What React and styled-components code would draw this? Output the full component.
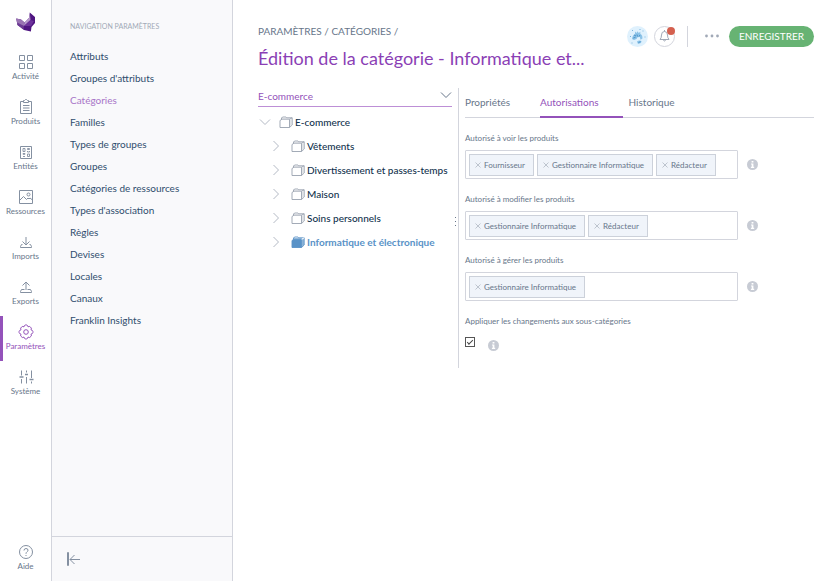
import React from "react";
import styled, { createGlobalStyle, css } from "styled-components";

const color = {
  purple: "#9452ba",
  purpleDark: "#8b3fb5",
  ink: "#2f4d6d",
  dark: "#11324d",
  grey: "#67768a",
  icon: "#8490a1",
  greyLight: "#a1a9b7",
  line: "#d3d5dd",
  panel: "#f9f9fb",
  blue: "#5992c7",
  green: "#67b373",
};

const GlobalStyle = createGlobalStyle`
  *, *::before, *::after { box-sizing: border-box; }
  body { margin: 0; background: #fff; }
  body, button, input, select {
    font-family: Lato, "Open Sans", sans-serif;
    font-size: 10px;
  }
  button { padding: 0; border: 0; background: none; color: inherit; cursor: pointer; }
  ul { list-style: none; margin: 0; padding: 0; }
  a { color: inherit; text-decoration: none; }
  svg { display: block; flex: none; }
`;

const Page = styled.div`
  display: flex;
  min-height: 100vh;
`;

const Rail = styled.nav`
  flex: none;
  width: 52px;
  display: flex;
  flex-direction: column;
  border-right: 1px solid ${color.line};
`;

const LogoLink = styled.a`
  height: 46px;
  display: flex;
  justify-content: center;
  padding-top: 12px;
`;

const RailLink = styled.a`
  height: 45px;
  padding-top: 8px;
  display: flex;
  flex-direction: column;
  align-items: center;
  font-size: 8px;
  line-height: 13px;
  white-space: nowrap;
  color: ${(p) => (p.$active ? color.purple : color.grey)};
  ${(p) => p.$active && css`box-shadow: inset 3px 0 ${color.purple};`}

  > svg { color: ${(p) => (p.$active ? color.purple : color.icon)}; }
`;

const RailFoot = styled.div`
  margin-top: auto;
`;

const Panel = styled.aside`
  flex: none;
  width: 181px;
  display: flex;
  flex-direction: column;
  background: ${color.panel};
  border-right: 1px solid ${color.line};
`;

const PanelBody = styled.div`
  flex: 1;
  padding: 20px 18px 0;
`;

const PanelHeading = styled.h2`
  margin: 0 0 13px;
  font-size: 7px;
  line-height: 12px;
  font-weight: 400;
  text-transform: uppercase;
  color: ${color.greyLight};
`;

const PanelLink = styled.a`
  display: block;
  line-height: 22px;
  color: ${(p) => (p.$active ? "#a875c8" : color.ink)};
`;

const PanelFoot = styled.div`
  height: 45px;
  display: flex;
  align-items: center;
  padding-left: 14px;
  border-top: 1px solid ${color.line};
  color: ${color.icon};
`;

const Main = styled.main`
  flex: 1;
  min-width: 0;
  padding: 25px 26px 0 25px;
`;

const Header = styled.header`
  display: flex;
  justify-content: space-between;
  gap: 24px;
`;

const Heading = styled.div`
  min-width: 0;
`;

const Breadcrumb = styled.nav`
  line-height: 13px;
  text-transform: uppercase;
  color: ${color.grey};
`;

const Title = styled.h1`
  margin: 5px 0 0;
  font-size: 18px;
  line-height: 30px;
  font-weight: 400;
  white-space: nowrap;
  color: ${color.purpleDark};
`;

const Actions = styled.div`
  flex: none;
  display: flex;
  align-items: center;
  height: 22px;
`;

const RoundButton = styled.button`
  position: relative;
  width: 21px;
  height: 21px;
  margin-right: 6px;
  display: grid;
  place-items: center;
  border-radius: 50%;
  border: ${(p) => (p.$outlined ? `1px solid ${color.line}` : "0")};
  background: ${(p) => (p.$outlined ? "#fff" : "#dff1fd")};
  color: ${color.greyLight};
`;

const Badge = styled.span`
  position: absolute;
  top: 0;
  right: -1px;
  width: 8px;
  height: 8px;
  border-radius: 50%;
  background: #d4604f;
`;

const Separator = styled.span`
  width: 1px;
  height: 21px;
  margin: 0 17px 0 6px;
  background: ${color.line};
`;

const DotsButton = styled.button`
  height: 20px;
  margin-right: 10px;
  color: ${color.greyLight};
`;

const SaveButton = styled.button`
  height: 21px;
  padding: 0 10px;
  border-radius: 11px;
  background: ${color.green};
  color: #fff;
  text-transform: uppercase;
`;

const Columns = styled.div`
  display: flex;
  margin-top: 15px;
`;

const TreeColumn = styled.section`
  flex: none;
  width: 194px;
`;

const TreeSelectWrap = styled.div`
  display: grid;
  align-items: center;
  border-bottom: 1px solid #bd8fd6;

  > * { grid-area: 1 / 1; }
  > svg { justify-self: end; color: ${color.grey}; pointer-events: none; margin-bottom: 5px; }
`;

const TreeSelect = styled.select`
  appearance: none;
  width: 100%;
  height: 18px;
  padding: 0 0 2px;
  border: 0;
  background: none;
  color: ${color.purple};
`;

const TreeList = styled.ul`
  padding-top: 3px;
`;

const TreeRow = styled.li`
  height: 24px;
  display: flex;
  align-items: center;
  padding-left: ${(p) => (p.$level ? 14 : 1)}px;
  color: ${(p) => (p.$selected ? color.blue : color.dark)};
`;

const Toggle = styled.button`
  width: ${(p) => (p.$level ? 12 : 13)}px;
  height: 14px;
  margin-right: 7px;
  display: grid;
  place-items: center start;
  color: #b4bac5;
`;

const NodeButton = styled.button`
  display: flex;
  align-items: center;
  gap: 2px;
  font-weight: ${(p) => (p.$selected ? 700 : 500)};
  white-space: nowrap;
`;

const Handle = styled.div`
  flex: none;
  width: 6px;
  display: flex;
  align-items: center;
  justify-content: flex-end;
  padding: 0 1px 12px 0;
  color: ${color.grey};
`;

const Detail = styled.section`
  flex: 1;
  min-width: 0;
  padding: 0 0 17px 6px;
  border-left: 1px solid ${color.line};
`;

const Tabs = styled.div`
  display: flex;
  gap: 6px;
  border-bottom: 1px solid ${color.line};
`;

const Tab = styled.button`
  height: 30px;
  margin-bottom: -1px;
  padding-right: 24px;
  border-bottom: 2px solid ${(p) => (p.$active ? color.purple : "transparent")};
  color: ${(p) => (p.$active ? color.purple : color.grey)};
`;

const Form = styled.form`
  padding-top: 14px;
`;

const Field = styled.div`
  margin-bottom: 14px;
`;

const FieldLabel = styled.label`
  display: block;
  font-size: ${(p) => p.$size || 8}px;
  line-height: 12px;
  margin-bottom: 6px;
  color: ${color.grey};
`;

const FieldLine = styled.div`
  display: flex;
  align-items: center;
  gap: 9px;
`;

const TagBox = styled.div`
  flex: 0 1 273px;
  min-width: 0;
  height: 29px;
  display: flex;
  align-items: center;
  gap: 3px;
  padding: 0 3px;
  border: 1px solid ${color.line};
  border-radius: 1px;
`;

const Tag = styled.span`
  flex: none;
  height: 22px;
  display: flex;
  align-items: center;
  gap: 3px;
  padding: 0 8px 0 5px;
  border: 1px solid #ccd1da;
  background: #f0f4fa;
  font-size: 8px;
  color: ${color.grey};
`;

const RemoveButton = styled.button`
  color: #b0b7c3;
`;

const TagInput = styled.input`
  flex: 1;
  min-width: 0;
  height: 20px;
  padding: 0;
  border: 0;
  outline: 0;
  background: none;
`;

const InfoButton = styled.button`
  color: #c7cbd4;
`;

const CheckLine = styled.div`
  display: flex;
  align-items: flex-start;
  gap: 13px;
`;

const Checkbox = styled.input`
  appearance: none;
  width: 10px;
  height: 10px;
  margin: 4px 0 0;
  display: grid;
  place-items: center;
  border: 1px solid #555;
  background: #fff;

  &:checked::before {
    content: "";
    width: 6px;
    height: 3px;
    margin-bottom: 2px;
    border: solid #444;
    border-width: 0 0 1px 1px;
    transform: rotate(-45deg);
  }
`;

const CheckInfo = styled(InfoButton)`
  margin-top: 7px;
`;

const Stroke = ({ w = 16, h = 16, box, children, ...rest }) => (
  <svg width={w} height={h} viewBox={box || `0 0 ${w} ${h}`} fill="none" stroke="currentColor" strokeWidth="1" aria-hidden="true" {...rest}>
    {children}
  </svg>
);

const Logo = () => (
  <svg width="20" height="20" viewBox="0 0 20 20" aria-hidden="true">
    <path d="M.2 6.500 5 7.600 8.600 10.500 13 6 13.800.5 19 5v6l-3.500 4-.6 4.500L8 18l-6.500-5z" fill="#4f1581" />
    <path d="M.2 6.500 5 7.600l3.600 2.900-.6 3.500-6.500-1z" fill="#9a74b3" />
    <path d="M1.200 10.500 8 14l-.5 3.500L1.500 13z" fill="#6c3a94" />
    <path d="M13.800.5 14.500 8 8 14l.6-3.500L13 6z" fill="#b79acb" />
    <path d="m8 14 6.500-6 3.500 1-3 5z" fill="#6d329b" />
  </svg>
);

const icons = {
  activity: (
    <Stroke>
      <path d="M1.500 1.500h5v5h-5zM9.500 1.500h5v5h-5zM1.500 9.500h5v5h-5zM9.500 9.500h5v5h-5z" />
    </Stroke>
  ),
  products: (
    <Stroke>
      <path d="M5.500 2.500h-3v12h11v-12h-3M5.500 3.500v-2h1l1-1h1l1 1h1v2zM5 6.500h6.500M5 9h6.500M5 11.500h6.500" />
    </Stroke>
  ),
  entities: (
    <Stroke>
      <path d="M2.500 2.500h11v12h-11z" />
      <path d="M5 4.500h2v3H5zM9.500 4.500h2v1h-2zM9.500 7v1h2V7M5 9.500h2v.8H5zM5 12.500h2M9.500 10h2v2.500h-2z" strokeWidth="0.900" />
    </Stroke>
  ),
  assets: (
    <Stroke>
      <path d="M1.500 1.500h13v13h-13zM2 11l3.500-3.500 3 3L10 9l1 1 1-1 2.500 2" />
      <circle cx="10.500" cy="5.500" r="1.500" />
    </Stroke>
  ),
  imports: (
    <Stroke>
      <path d="M8 3v8M4.500 7.500 8 11l3.500-3.500M4.500 10.500h-1l-1 2v1h11v-1l-1-2h-1" />
    </Stroke>
  ),
  exports: (
    <Stroke>
      <path d="M8 11V3M4.500 6.500 8 3l3.500 3.500M6.500 10.500h-3l-1 2v1h11v-1l-1-2h-3" />
    </Stroke>
  ),
  settings: (
    <Stroke>
      <circle cx="8" cy="8" r="2.300" />
      <path d="m6.500 1.500.6-.5h1.800l.6.500.5 1.300 1.700-.4 1.700 1.700-.4 1.700 1.300.6.600 1v1.300l-.6.900-1.300.600.4 1.700-1.700 1.600-1.700-.4-.5 1.300-.7.500H7.100l-.6-.5-.5-1.300-1.700.4-1.700-1.600.4-1.700-1.300-.6-.6-1V7.300l.6-.9L3 5.800l-.4-1.700 1.700-1.700 1.700.4z" />
    </Stroke>
  ),
  system: (
    <Stroke>
      <path d="M3.500 1.500v5M3.500 10v4.500M8.500 1.500v2M8.500 8v6.500M13.500 1.500V9M13.500 12.500v2" />
      <path d="M1.500 8h4M7 5.500h3M11.500 10.500h4" strokeWidth="1.500" />
    </Stroke>
  ),
  help: (
    <Stroke>
      <circle cx="8" cy="8" r="6.500" />
      <path d="M6 6.500q0-2 2-2t2 1.700q0 1-1 1.600t-1 2M8 11v1" />
    </Stroke>
  ),
};

const ChevronDown = () => (
  <Stroke w={12} h={8}>
    <path d="m1 1.500 5 5 5-5" />
  </Stroke>
);

const ChevronRight = () => (
  <Stroke w={8} h={12}>
    <path d="m1.500 1 5 5-5 5" />
  </Stroke>
);

const Folder = ({ filled }) => (
  <Stroke w={14} h={13} strokeWidth="0.900">
    <path d="M1 11.500v-7l2-1.300h7.500v8.300z" stroke={filled ? color.blue : "#99a1af"} fill={filled ? color.blue : "#fff"} />
    <path d="M2.500 3.200V1.800L4 1h3l.6.800h5.600V9L10.500 11.500" stroke={filled ? color.blue : "#99a1af"} />
    <path d="m10.500 3.200 2.600-1.400" stroke={filled ? "#fff" : "#99a1af"} />
    <path d="M3 2.500h8.500l-1 .7H3z" fill={filled ? color.blue : "#c5cad2"} stroke="none" />
    <path d="M11.300 3.500v7l1.400-1.500V3z" fill={filled ? color.blue : "#d5d9df"} stroke="none" />
  </Stroke>
);

const Info = () => (
  <svg width="11" height="11" viewBox="0 0 11 11" aria-hidden="true">
    <circle cx="5.500" cy="5.500" r="5.500" fill="currentColor" />
    <path d="M4.600 2h1.800v1.500H4.600zM4 4.500h2.400v3.300h.8V9H3.900V7.800h.8V5.600H4z" fill="#fff" />
  </svg>
);

const Avatar = () => (
  <svg width="21" height="21" viewBox="0 0 21 21" aria-hidden="true">
    <path d="M5 13q.5-4 3-5L8 5.500l1.500 1.600 1-1.800 1.200 1.700 1.600-1.200v2q2.700 1.500 2 5l-1.800 1-.7-2.800-2.300.3-1 1.700L7 14z" fill="#8cc3e8" />
    <path d="M10 15.500q2-1.500 4.500-.5l-.5 2-3 1z" fill="#8cc3e8" />
    <path d="m7 9 2 1M6.300 12l2.200-.7M10 8.500l.5 2M13 9l-1 1.500M11.500 16.500l2-.8" stroke="#4d94c9" fill="none" />
    <path d="M3 10.500h1M5 4.500h1M15.500 5h1M17.500 11h1M4.500 17h1M12.500 3.500h1" stroke="#7cb6de" />
  </svg>
);

const Bell = () => (
  <Stroke w={11} h={12}>
    <path d="M5.500 0v1.500M1 9.500q1.500-1.500 1.500-4.500 0-3.500 3-3.500t3 3.500q0 3 1.500 4.500zM4.500 9.500q0 1.500 1 1.500t1-1.500" />
  </Stroke>
);

const railItems = [
  ["activity", "Activité"],
  ["products", "Produits"],
  ["entities", "Entités"],
  ["assets", "Ressources"],
  ["imports", "Imports"],
  ["exports", "Exports"],
  ["settings", "Paramètres"],
  ["system", "Système"],
];

const panelItems = [
  "Attributs",
  "Groupes d'attributs",
  "Catégories",
  "Familles",
  "Types de groupes",
  "Groupes",
  "Catégories de ressources",
  "Types d'association",
  "Règles",
  "Devises",
  "Locales",
  "Canaux",
  "Franklin Insights",
];

const treeItems = [
  { label: "E-commerce", level: 0 },
  { label: "Vêtements", level: 1 },
  { label: "Divertissement et passes-temps", level: 1 },
  { label: "Maison", level: 1 },
  { label: "Soins personnels", level: 1 },
  { label: "Informatique et électronique", level: 1, selected: true },
];

const permissionFields = [
  { id: "view", label: "Autorisé à voir les produits", tags: ["Fournisseur", "Gestionnaire Informatique", "Rédacteur"] },
  { id: "edit", label: "Autorisé à modifier les produits", tags: ["Gestionnaire Informatique", "Rédacteur"] },
  { id: "own", label: "Autorisé à gérer les produits", tags: ["Gestionnaire Informatique"] },
];

const PermissionField = ({ id, label, tags }) => (
  <Field>
    <FieldLabel htmlFor={id}>{label}</FieldLabel>
    <FieldLine>
      <TagBox>
        {tags.map((tag) => (
          <Tag key={tag}>
            <RemoveButton type="button" aria-label={`Retirer ${tag}`}>
              <Stroke w={6} h={6}>
                <path d="m.5.500 5 5m0-5-5 5" strokeWidth="0.800" />
              </Stroke>
            </RemoveButton>
            {tag}
          </Tag>
        ))}
        <TagInput id={id} type="text" />
      </TagBox>
      <InfoButton type="button" aria-label="Information">
        <Info />
      </InfoButton>
    </FieldLine>
  </Field>
);

export default function App() {
  return (
    <>
      <GlobalStyle />
      <Page>
        <Rail aria-label="Menu principal">
          <LogoLink href="#" aria-label="Accueil">
            <Logo />
          </LogoLink>
          {railItems.map(([icon, label]) => (
            <RailLink key={icon} href="#" $active={icon === "settings"}>
              {icons[icon]}
              {label}
            </RailLink>
          ))}
          <RailFoot>
            <RailLink href="#">
              {icons.help}
              Aide
            </RailLink>
          </RailFoot>
        </Rail>

        <Panel>
          <PanelBody>
            <PanelHeading>Navigation paramètres</PanelHeading>
            <ul>
              {panelItems.map((item) => (
                <li key={item}>
                  <PanelLink href="#" $active={item === "Catégories"}>
                    {item}
                  </PanelLink>
                </li>
              ))}
            </ul>
          </PanelBody>
          <PanelFoot>
            <button type="button" aria-label="Réduire le panneau">
              <Stroke w={14} h={14}>
                <path d="M1.500.500h1v13h-1zM14 7.500H4M8.500 3 4 7.500 8.500 12" />
              </Stroke>
            </button>
          </PanelFoot>
        </Panel>

        <Main>
          <Header>
            <Heading>
              <Breadcrumb aria-label="Fil d'Ariane">
                <a href="#">Paramètres</a> / <a href="#">Catégories</a> /
              </Breadcrumb>
              <Title>Édition de la catégorie - Informatique et...</Title>
            </Heading>
            <Actions>
              <RoundButton type="button" aria-label="Profil">
                <Avatar />
              </RoundButton>
              <RoundButton type="button" aria-label="Notifications" $outlined>
                <Bell />
                <Badge />
              </RoundButton>
              <Separator />
              <DotsButton type="button" aria-label="Autres actions">
                <svg width="14" height="4" viewBox="0 0 14 4" fill="currentColor" aria-hidden="true">
                  <circle cx="1.500" cy="2" r="1.400" />
                  <circle cx="7" cy="2" r="1.400" />
                  <circle cx="12.500" cy="2" r="1.400" />
                </svg>
              </DotsButton>
              <SaveButton type="button">Enregistrer</SaveButton>
            </Actions>
          </Header>

          <Columns>
            <TreeColumn>
              <TreeSelectWrap>
                <TreeSelect aria-label="Arbre de catégories" defaultValue="ecommerce">
                  <option value="ecommerce">E-commerce</option>
                </TreeSelect>
                <ChevronDown />
              </TreeSelectWrap>
              <TreeList>
                {treeItems.map(({ label, level, selected }) => (
                  <TreeRow key={label + level} $level={level} $selected={selected}>
                    <Toggle type="button" $level={level} aria-label={`Déplier ${label}`}>
                      {level ? <ChevronRight /> : <ChevronDown />}
                    </Toggle>
                    <NodeButton type="button" $selected={selected}>
                      <Folder filled={selected} />
                      {label}
                    </NodeButton>
                  </TreeRow>
                ))}
              </TreeList>
            </TreeColumn>
            <Handle>
              <svg width="2" height="10" viewBox="0 0 2 10" fill="currentColor" aria-hidden="true">
                <path d="M0 0h1v1H0zM0 4h1v1H0zM0 8h1v1H0z" />
              </svg>
            </Handle>
            <Detail>
              <Tabs role="tablist">
                <Tab type="button" role="tab">Propriétés</Tab>
                <Tab type="button" role="tab" aria-selected="true" $active>Autorisations</Tab>
                <Tab type="button" role="tab">Historique</Tab>
              </Tabs>
              <Form>
                {permissionFields.map((field) => (
                  <PermissionField key={field.id} {...field} />
                ))}
                <FieldLabel htmlFor="apply">Appliquer les changements aux sous-catégories</FieldLabel>
                <CheckLine>
                  <Checkbox id="apply" type="checkbox" defaultChecked />
                  <CheckInfo type="button" aria-label="Information">
                    <Info />
                  </CheckInfo>
                </CheckLine>
              </Form>
            </Detail>
          </Columns>
        </Main>
      </Page>
    </>
  );
}
